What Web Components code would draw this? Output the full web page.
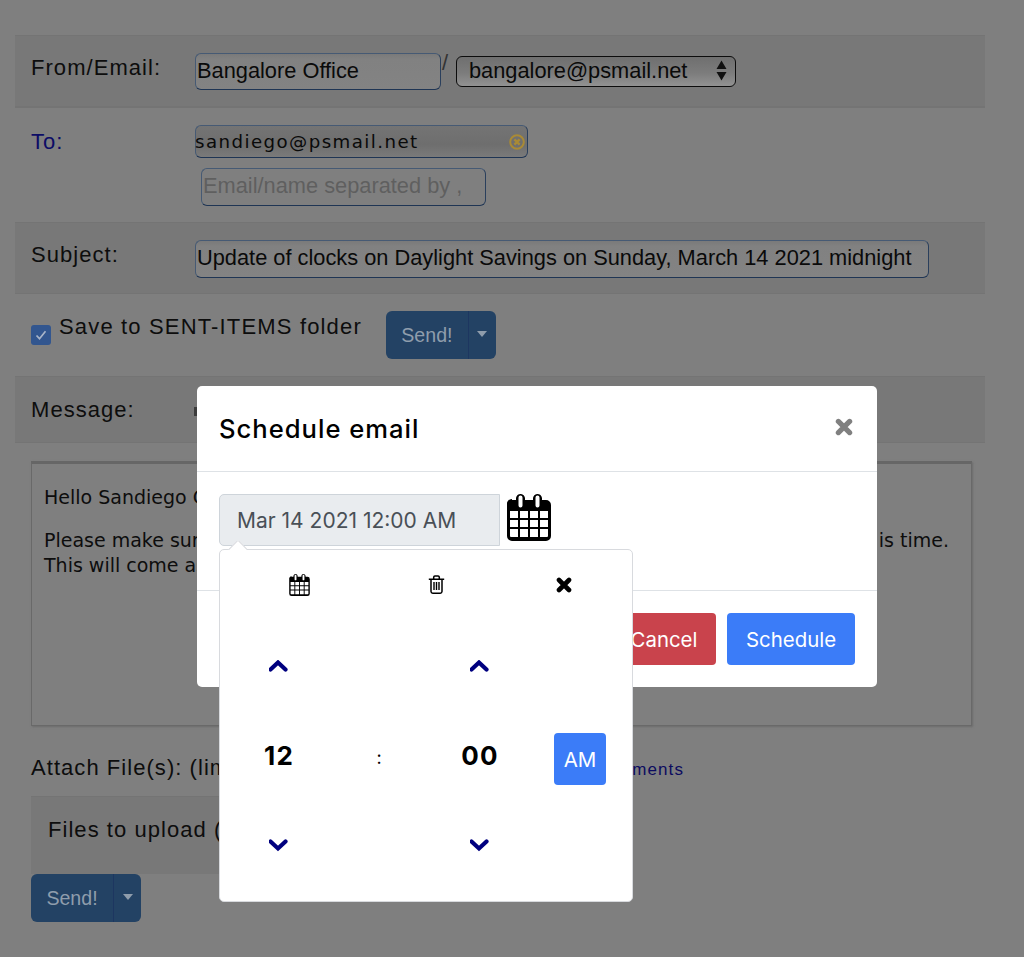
<!DOCTYPE html>
<html lang="en"><head><meta charset="utf-8"><title>Schedule email</title>
<style>
html,body{margin:0;background:#7f7f7f}
body{width:1024px;height:957px;overflow:hidden;position:relative;font-family:"Liberation Sans",Arial,sans-serif;color:#0a0a0a}
</style></head><body>
<mail-form>
  <form-row band style="--h:72px">
    <span slot="label">From/Email:</span>
    <text-field style="--w:246px;--hh:37px">Bangalore Office</text-field>
    <span style="font:22px 'Liberation Sans';margin:-3px 0 0 1px;width:14px;color:#333">/</span>
    <select-field>bangalore@psmail.net</select-field>
  </form-row>
  <form-row style="--h:115px" to>
    <span slot="label" style="color:#0c0c66">To:</span>
    <recipient-list></recipient-list>
  </form-row>
  <form-row band style="--h:72px">
    <span slot="label">Subject:</span>
    <text-field style="--w:734px;--hh:38px">Update of clocks on Daylight Savings on Sunday, March 14 2021 midnight</text-field>
  </form-row>
  <save-row></save-row>
  <form-row band style="--h:67px" msg>
    <span slot="label">Message:</span>
    <i style="display:block;width:3px;height:9px;background:#3c3c3c;margin:12px 0 0 -1px"></i>
  </form-row>
  <message-box></message-box>
  <attach-row></attach-row>
  <upload-band></upload-band>
  <split-send style="margin-left:16px"></split-send>
</mail-form>
<schedule-modal></schedule-modal>
<script>
const CAL=`<svg viewBox="0 0 44 47" width="100%" height="100%" aria-hidden="true"><path fill="#000" fill-rule="evenodd" d="M5 6h4V4a5 5 0 0 1 5-4 5 5 0 0 1 4 4v2h8V4a5 5 0 0 1 4-4 5 5 0 0 1 5 4v2h4a5 5 0 0 1 5 5v31a5 5 0 0 1-5 5H5a5 5 0 0 1-5-5V11a5 5 0 0 1 5-6zM3 17v7h8v-7zm10 0v7h8v-7zm10 0v7h8v-7zm10 0v7h8v-7zM3 26v7h8v-7zm10 0v7h8v-7zm10 0v7h8v-7zm10 0v7h8v-7zM3 35v7a1 1 0 0 0 1 1h7v-8zm10 0v8h8v-8zm10 0v8h8v-8zm10 0v8h7a1 1 0 0 0 1-1v-7z"/><path fill="#fff" d="M11.5 3.5a2 2 0 0 1 4 0v8a2 2 0 0 1-4 0zm17 0a2 2 0 0 1 4 0v8a2 2 0 0 1-4 0z"/></svg>`;
const TIMES=c=>`<svg viewBox="0 0 16 16" width="100%" height="100%" aria-hidden="true"><path d="M3 3l10 10M13 3L3 13" stroke="${c}" stroke-width="4.6" stroke-linecap="round" fill="none"/></svg>`;
const TRASH=`<svg viewBox="0 0 17 19" width="17" height="19" aria-hidden="true"><g fill="none" stroke="#000" stroke-width="1.5"><path d="M.8 4.2h15.4M3 4.2v12.3A1.8 1.8 0 0 0 4.8 18.2h7.4a1.8 1.8 0 0 0 1.8-1.7V4.2M5.7 4V2.1A1.2 1.2 0 0 1 6.9 1h3.2a1.2 1.2 0 0 1 1.2 1.1V4"/><path d="M6 7v8M8.5 7v8M11 7v8" stroke-width="1.4"/></g></svg>`;
const CHEV=(d,vb)=>`<svg viewBox="${vb}" width="20" height="13" aria-hidden="true"><path d="${d}" fill="none" stroke="#00007f" stroke-width="4.2" stroke-linecap="round" stroke-linejoin="miter"/></svg>`;
function def(name,html){customElements.define(name,class extends HTMLElement{constructor(){super();this.attachShadow({mode:'open'}).innerHTML=html}})}
const LABEL=`font:22px "Liberation Sans",Arial,sans-serif;letter-spacing:1.05px;color:#0d0d0d`;
const FIELD=`border:1px solid #465a74;border-bottom-color:#1f3554;border-right-color:#2a3f5c;border-radius:6px`;
def('mail-form',`<style>:host{display:block;width:970px;padding:35px 0 0 15px;box-sizing:content-box}</style><slot></slot>`);
def('form-row',`<style>
:host{display:flex;height:var(--h);box-sizing:border-box;padding-left:16px;border-top:1px solid #747474;align-items:flex-start}
:host([band]){background:#787878;border-bottom:1px solid #747474;padding-top:17px}
:host([to]){padding-top:19px}
:host([msg]){padding-top:18px}
.l{width:164px;flex:none;${LABEL};line-height:30px}
:host([to]) .l{margin-bottom:-2px}
:host([to]) .c{margin-top:-2px}
.c{display:flex;align-items:flex-start;flex:1}
</style><div class="l"><slot name="label"></slot></div><div class="c"><slot></slot></div>`);
def('text-field',`<style>:host{display:block;flex:none;width:var(--w);height:var(--hh);box-sizing:border-box;${FIELD};background:linear-gradient(#7a7a7a,#818181 15%,#838383);font:21.8px/34px "Liberation Sans",Arial,sans-serif;color:#0a0a0a;padding-left:1px;white-space:nowrap;overflow:hidden}</style><slot></slot>`);
def('select-field',`<style>:host{display:flex;flex:none;align-items:center;justify-content:space-between;width:280px;height:31px;margin-top:3px;box-sizing:border-box;border:1px solid #0c0c0c;border-radius:6px;background:linear-gradient(#6f6f6f,#7c7c7c 55%,#929292);font:21.8px "Liberation Sans",Arial,sans-serif;color:#0a0a0a;padding:0 8px 2px 12px;white-space:nowrap}svg{flex:none}</style><slot></slot><svg width="11" height="25" viewBox="0 0 11 25" aria-hidden="true"><path d="M5.5 2.5L10.5 11H.5zM.5 14h10l-5 8.5z" fill="#111"/></svg>`);
def('recipient-list',`<style>:host{display:flex;flex-direction:column;align-items:flex-start}
.chip{display:flex;justify-content:space-between;align-items:center;width:333px;height:33px;box-sizing:border-box;${FIELD};background:linear-gradient(#747474,#6e6e6e 60%,#7a7a7a);font:18.2px/37px "DejaVu Sans",Verdana,sans-serif;letter-spacing:1.43px;color:#0a0a0a;padding-right:2px}
.t{margin-left:-1px}
.x{width:16px;height:16px;flex:none;margin-top:1px}
.in{width:285px;height:38px;box-sizing:border-box;margin:10px 0 0 6px;${FIELD};font:21.8px/34px "Liberation Sans",Arial,sans-serif;color:#5f5f5f;padding-left:1px;white-space:nowrap;overflow:hidden}
</style><div class="chip"><span class="t">sandiego@psmail.net</span><svg class="x" viewBox="0 0 16 16" aria-hidden="true"><circle cx="8" cy="8" r="6.8" fill="none" stroke="#a98a35" stroke-width="2"/><path d="M5.4 5.4l5.2 5.2M10.6 5.4l-5.2 5.2" stroke="#a98a35" stroke-width="2.4"/></svg></div><div class="in">Email/name separated by ,</div>`);
def('split-send',`<style>:host{display:inline-flex;height:48px;width:110px;background:#234264;border-radius:6px;overflow:hidden;font:19.6px/48px "Liberation Sans",Arial,sans-serif;color:#8f9dac}
.a{width:82px;text-align:center;box-sizing:border-box}
.b{flex:1;border-left:1px solid #1d3660;display:flex;align-items:center;justify-content:center}
.b i{display:block;border:5.5px solid transparent;border-top:6px solid #8f9dac;border-bottom:0;margin-top:-2px}
</style><div class="a">Send!</div><div class="b"><i></i></div>`);
def('save-row',`<style>:host{display:flex;height:82px;padding-left:16px;align-items:flex-start}
.cb{width:20px;height:20px;margin-top:31px;background:#32568f;border-radius:3px;flex:none;display:block}
.t{${LABEL};letter-spacing:1.16px;margin:18px 24px 0 8px;line-height:30px;white-space:nowrap}
split-send{margin-top:17px}
</style><svg class="cb" viewBox="0 0 20 20" aria-hidden="true"><path d="M5.5 10.5l3 3.2 6-7.5" fill="none" stroke="#a8b4c8" stroke-width="1.7"/></svg><div class="t">Save to SENT-ITEMS folder</div><split-send></split-send>`);
def('message-box',`<style>:host{display:block;margin:18px 0 0 16px;width:941px;height:265px;box-sizing:border-box;border:1px solid #696969;border-top:3px solid #666;background:#7f7f7f;padding:21px 22px 0 12px;font:19px/25px "DejaVu Sans",Verdana,sans-serif;color:#0d0d0d;box-shadow:1px 1px 2px #6c6c6c}
p{margin:0}.l{display:flex;justify-content:space-between;white-space:nowrap}
.g{margin-top:18px}
</style><p>Hello Sandiego Office</p><p class="l g"><span>Please make sure</span><span>is time.</span></p><p>This will come as</p>`);
def('attach-row',`<style>:host{display:flex;justify-content:space-between;width:653px;margin:27px 0 0 16px;align-items:baseline;height:43px;${LABEL};white-space:nowrap;line-height:30px}
a{font-size:17px;letter-spacing:1.1px;color:#0c0c60}
</style><span>Attach File(s): (limit</span><a>ments</a>`);
def('upload-band',`<style>:host{display:block;margin-left:16px;width:500px;height:78px;box-sizing:border-box;background:#787878;border-top:1px solid #747474;padding:18px 0 0 17px;${LABEL};letter-spacing:1.05px;line-height:30px;white-space:nowrap}</style>Files to upload (`);
customElements.define('cal-icon',class extends HTMLElement{constructor(){super();this.attachShadow({mode:'open'}).innerHTML=`<style>:host{display:block;flex:none;width:44px;height:47px}</style>${CAL}`}});
def('time-popover',`<style>:host{position:absolute;left:22px;top:163px;width:414px;height:353px;box-sizing:border-box;background:#fff;border:1px solid #d8dade;border-radius:5px;font-family:Inter,sans-serif;color:#000}
.tip{position:absolute;left:7px;top:-9px;width:20px;height:9px;overflow:hidden}
.tip i{display:block;width:14px;height:14px;background:#fff;transform:rotate(45deg);margin:2px 0 0 3px;border:1px solid #d8dade}
.top{display:grid;grid-template-columns:138px 136px 120px;padding-left:10px;height:69px;margin-bottom:2px;align-items:center;justify-items:center}
.cal{width:21px;height:22px}.tm{width:16px;height:16px}
.g{display:grid;grid-template-columns:118px 82px 120px 82px;grid-template-rows:90px 89px 90px;justify-items:center;align-items:center}
.n{font-size:26px;font-weight:700;letter-spacing:1.2px}
.am{width:52px;height:52px;border-radius:4px;background:#3b7cf8;color:#fff;font-size:20.5px;line-height:54px;text-align:center;margin:6px 2px 0 0}
.c{font-size:18px;margin-top:3px}
svg{display:block}
</style><div class="tip"><i></i></div><div class="top"><div class="cal">${CAL}</div><div>${TRASH}</div><div class="tm">${TIMES('#000')}</div></div>
<div class="g"><div>${CHEV('M2.5 10.5L10 3.5l7.5 7','1 1 20 13')}</div><div></div><div>${CHEV('M2.5 10.5L10 3.5l7.5 7','1 1 20 13')}</div><div></div>
<div class="n">12</div><div class="c">:</div><div class="n">00</div><div class="am">AM</div>
<div>${CHEV('M2.5 2.5L10 9.5l7.5-7','1 0 20 13')}</div><div></div><div>${CHEV('M2.5 2.5L10 9.5l7.5-7','1 0 20 13')}</div><div></div></div>`);
def('schedule-modal',`<style>:host{position:absolute;left:197px;top:386px;width:680px;height:301px;background:#fff;border-radius:5px;font-family:Inter,sans-serif;color:#000;display:flex;flex-direction:column;box-sizing:border-box}
header{height:86px;box-sizing:border-box;border-bottom:1px solid #dee2e6;display:flex;justify-content:space-between;align-items:center;padding:0 24px 0 22px;flex:none}
h2{margin:0;font-size:25.6px;font-weight:500;letter-spacing:1px}
.x{width:18px;height:18px;margin-top:-3px}
.body{height:119px;box-sizing:border-box;border-bottom:1px solid #dee2e6;padding:22px 0 0 22px;display:flex;gap:7px;align-items:flex-start;flex:none}
.in{width:281px;height:52px;box-sizing:border-box;background:#e9ecef;border:1px solid #ced4da;border-radius:5px 0 0 5px;font-size:21px;line-height:52px;color:#495057;padding-left:17px;white-space:nowrap}
footer{display:flex;justify-content:flex-end;gap:11px;padding:22px 22px 0 0}
button{all:unset;height:52px;border-radius:4px;color:#fff;font:20.4px/54px Inter,sans-serif;text-align:center;box-sizing:border-box}
.can{background:#c9434c;width:104px}.sch{background:#3b7cf8;width:128px}
</style><header><h2>Schedule email</h2><div class="x">${TIMES('#808080')}</div></header><div class="body"><div class="in">Mar 14 2021 12:00 AM</div><cal-icon></cal-icon></div><footer><button class="can">Cancel</button><button class="sch">Schedule</button></footer><time-popover></time-popover>`);
</script>
</body></html>
